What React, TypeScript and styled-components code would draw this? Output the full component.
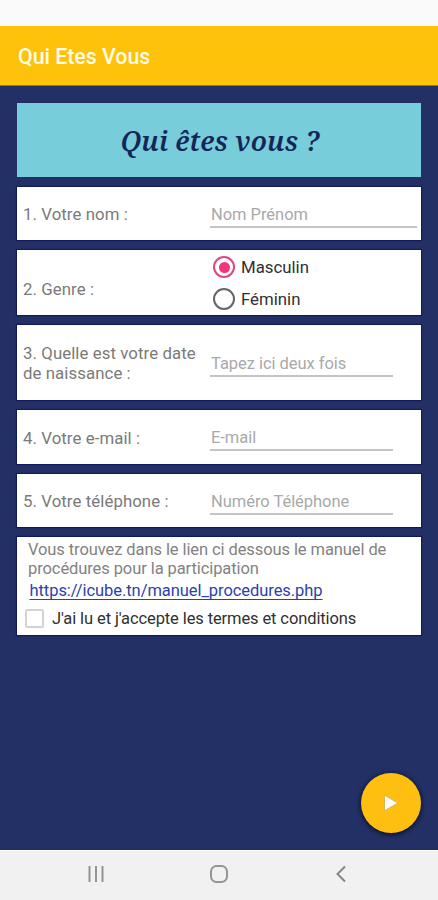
import React, { useState } from "react";
import styled, { createGlobalStyle } from "styled-components";

const GlobalStyle = createGlobalStyle`
  * { box-sizing: border-box; }
  body { margin: 0; background: #233066; font-family: Roboto, "Liberation Sans", sans-serif; }
`;

const Screen = styled.div`
  display: flex;
  flex-direction: column;
  height: 900px;
  width: 438px;
  overflow: hidden;
  background: #233066;
`;

const StatusBar = styled.div`
  flex: none;
  height: 26px;
  background: #fafafa;
`;

const AppBar = styled.header`
  flex: none;
  display: flex;
  align-items: center;
  height: 60px;
  padding: 2px 18px 0;
  background: #ffc20a;
  border-bottom: 1px solid #8a7a3a;
`;

const AppTitle = styled.h1`
  margin: 0;
  color: #fffbe8;
  font-size: 21.3px;
  font-weight: 500;
`;

const Content = styled.main`
  flex: 1;
  display: flex;
  flex-direction: column;
  gap: 10px;
  padding: 17px 17px 0;
`;

const Banner = styled.div`
  flex: none;
  display: flex;
  align-items: center;
  justify-content: center;
  height: 74.4px;
  padding-left: 2px;
  background: #77cdda;
  color: #142657;
  font-family: "Noto Serif", "Droid Serif", "DejaVu Serif", serif;
  font-size: 27px;
  font-style: italic;
  font-weight: 600;
  letter-spacing: 0.15px;
`;

const Card = styled.section<{ $height: number }>`
  flex: none;
  display: grid;
  grid-template-columns: 187px 1fr;
  align-items: center;
  height: ${(p) => p.$height}px;
  padding: 0 4px 0 6px;
  background: #fff;
  box-shadow: 0 0 1px 1px #10195a;
`;

const Label = styled.label<{ $drop?: number }>`
  padding-top: ${(p) => p.$drop ?? 1}px;
  color: #7a7a7a;
  font-size: 16.8px;
  line-height: 20px;
  letter-spacing: 0.08px;
  white-space: pre-line;
`;

const Field = styled.input<{ $wide?: boolean }>`
  width: ${(p) => (p.$wide ? 207 : 183)}px;
  height: 28px;
  padding: 3px 0 0 1px;
  border: 0;
  border-bottom: 2px solid #c4c4c4;
  border-radius: 0;
  background: transparent;
  outline: none;
  font: 16.5px Roboto, "Liberation Sans", sans-serif;
  letter-spacing: -0.04px;
  &::placeholder { color: #a9a9a9; opacity: 1; }
`;

const Choices = styled.div`
  display: flex;
  flex-direction: column;
  gap: 10px;
  padding: 1px 0 0 3px;
`;

const Choice = styled.div`
  display: flex;
  align-items: center;
  gap: 6px;
  height: 22px;
  color: #303030;
  font-size: 16.8px;
`;

const RadioRing = styled.span<{ $on: boolean }>`
  display: flex;
  align-items: center;
  justify-content: center;
  width: 22px;
  height: 22px;
  border: 2px solid ${(p) => (p.$on ? "#e0487f" : "#666")};
  border-radius: 50%;
  &::after {
    content: "";
    width: 11px;
    height: 11px;
    border-radius: 50%;
    background: ${(p) => (p.$on ? "#f0357a" : "transparent")};
  }
`;

const TermsCard = styled.section`
  flex: none;
  display: flex;
  flex-direction: column;
  align-items: flex-start;
  height: 97.5px;
  padding: 3px 8px 0;
  background: #fff;
  box-shadow: 0 0 1px 1px #10195a;
`;

const Notice = styled.p`
  margin: 0;
  padding-left: 3px;
  color: #828282;
  font-size: 16.5px;
  line-height: 19px;
  letter-spacing: -0.09px;
  white-space: pre-line;
`;

const ManualLink = styled.a`
  margin: 3px 0 0 4.5px;
  color: #2b3fb0;
  font-size: 16.5px;
  line-height: 20px;
  letter-spacing: -0.06px;
  text-decoration: underline;
  text-decoration-skip-ink: none;
  text-decoration-thickness: 1px;
  text-underline-offset: 3px;
`;

const Agreement = styled.div`
  display: flex;
  align-items: center;
  gap: 8px;
  margin-top: 8px;
  height: 19px;
  color: #303030;
  font-size: 16.5px;
  letter-spacing: -0.11px;
`;

const CheckSquare = styled.span`
  width: 19px;
  height: 19px;
  border: 2px solid #d3d3d3;
  border-radius: 2px;
`;

const ActionRow = styled.div`
  flex: none;
  display: flex;
  justify-content: flex-end;
  padding: 0 17px 17px;
`;

const NextButton = styled.button`
  display: flex;
  align-items: center;
  justify-content: center;
  width: 60px;
  height: 60px;
  padding: 0;
  border: 0;
  border-radius: 50%;
  background: #ffbf10;
  box-shadow: 0 1px 4px 1px rgba(5, 8, 30, 0.75);
`;

const NavBar = styled.nav`
  flex: none;
  display: flex;
  justify-content: space-between;
  align-items: center;
  height: 50.5px;
  padding: 0 87px 3px 86px;
  background: #f1f1f1;
  border-top: 1px solid #fff;
`;

const textQuestions = {
  name: { label: "1. Votre nom :", hint: "Nom Prénom" },
  birth: { label: "3. Quelle est votre date\nde naissance :", hint: "Tapez ici deux fois" },
  email: { label: "4. Votre e-mail :", hint: "E-mail" },
  phone: { label: "5. Votre téléphone :", hint: "Numéro Téléphone" },
};

function TextQuestion({
  height,
  question,
  wide,
}: {
  height: number;
  question: { label: string; hint: string };
  wide?: boolean;
}) {
  return (
    <Card $height={height}>
      <Label>{question.label}</Label>
      <Field $wide={wide} placeholder={question.hint} />
    </Card>
  );
}

export default function App() {
  const [gender, setGender] = useState("Masculin");
  return (
    <>
      <GlobalStyle />
      <Screen>
        <StatusBar />
        <AppBar>
          <AppTitle>Qui Etes Vous</AppTitle>
        </AppBar>
        <Content>
          <Banner>Qui êtes vous ?</Banner>
          <TextQuestion height={53} question={textQuestions.name} wide />
          <Card $height={65}>
            <Label $drop={12}>2. Genre :</Label>
            <Choices>
              {["Masculin", "Féminin"].map((name) => (
                <Choice key={name} onClick={() => setGender(name)}>
                  <RadioRing $on={gender === name} />
                  {name}
                </Choice>
              ))}
            </Choices>
          </Card>
          <TextQuestion height={75} question={textQuestions.birth} />
          <TextQuestion height={54} question={textQuestions.email} />
          <TextQuestion height={53} question={textQuestions.phone} />
          <TermsCard>
            <Notice>
              {"Vous trouvez dans le lien ci dessous le manuel de\nprocédures pour la participation"}
            </Notice>
            <ManualLink>https://icube.tn/manuel_procedures.php</ManualLink>
            <Agreement>
              <CheckSquare />
              J'ai lu et j'accepte les termes et conditions
            </Agreement>
          </TermsCard>
        </Content>
        <ActionRow>
          <NextButton aria-label="Suivant">
            <svg width="16" height="18" viewBox="0 0 16 18">
              <path d="M1.5 1.2v15.6L15 9z" fill="#fff" stroke="#d9b656" strokeWidth="1" />
            </svg>
          </NextButton>
        </ActionRow>
        <NavBar>
          <svg width="20" height="18" viewBox="0 0 20 18" stroke="#949494" strokeWidth="2">
            <path d="M3.5 1v16M10 1v16M16.5 1v16" />
          </svg>
          <svg width="20" height="20" viewBox="0 0 20 20" fill="none" stroke="#949494" strokeWidth="2">
            <rect x="2" y="2" width="16" height="16" rx="5.5" />
          </svg>
          <svg width="20" height="18" viewBox="0 0 20 18" fill="none" stroke="#858585" strokeWidth="2">
            <path d="M14 1.5L6.5 9l7.5 7.5" />
          </svg>
        </NavBar>
      </Screen>
    </>
  );
}
